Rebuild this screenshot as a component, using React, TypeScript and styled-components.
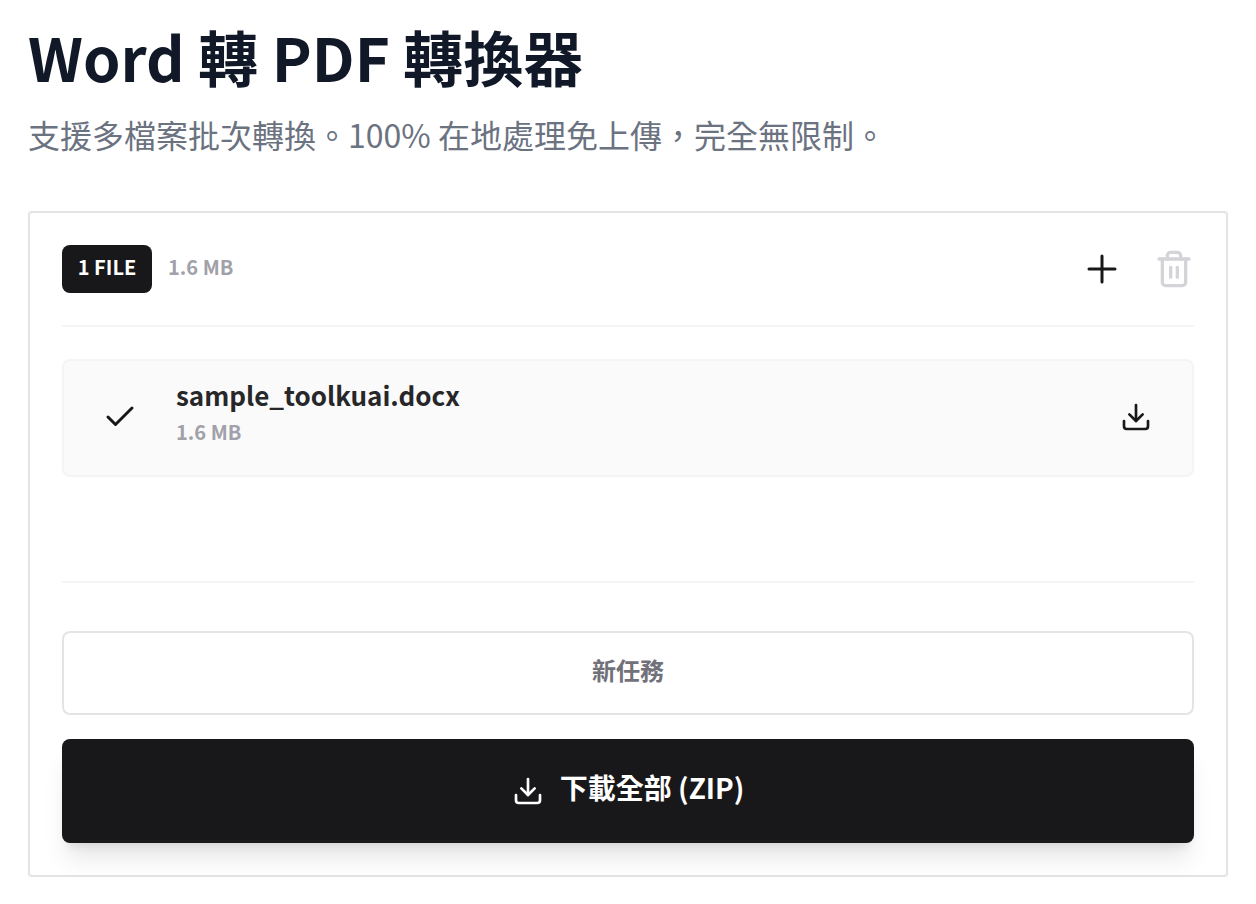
import { createGlobalStyle } from "styled-components";
import styled from "styled-components";

const GlobalStyle = createGlobalStyle`
  html, body {
    margin: 0;
    padding: 0;
    background: #ffffff;
    font-family: "Noto Sans CJK TC", "Noto Sans", sans-serif;
  }
`;

const Page = styled.div`
  padding: 12px 28px 0;
  box-sizing: border-box;
  width: 1256px;
`;

const Title = styled.h1`
  margin: 0;
  font-size: 60px;
  line-height: 88px;
  font-weight: 700;
  color: #111827;
`;

const Subtitle = styled.p`
  margin: 10px 0 53px;
  font-size: 32px;
  line-height: 48px;
  font-weight: 400;
  color: #6b7280;
`;

const Panel = styled.section`
  box-sizing: border-box;
  width: 1200px;
  height: 666px;
  padding: 32px;
  background: #fff;
  border: 2px solid #e4e4e7;
  border-radius: 4px;
  box-shadow: 0 1px 2px rgba(0, 0, 0, 0.05);
  display: flex;
  flex-direction: column;
`;

const Header = styled.div`
  display: flex;
  align-items: center;
  justify-content: space-between;
  height: 82px;
  padding-bottom: 33px;
  box-sizing: border-box;
  border-bottom: 2px solid #f4f4f5;
`;

const HeaderLeft = styled.div`
  display: flex;
  align-items: center;
  gap: 16px;
`;

const Badge = styled.span`
  display: flex;
  align-items: center;
  justify-content: center;
  box-sizing: border-box;
  width: 90px;
  height: 48px;
  padding-bottom: 4px;
  background: #18181b;
  color: #fff;
  border-radius: 8px;
  font-size: 20px;
  font-weight: 700;
`;

const Size = styled.span`
  padding-bottom: 4px;
  font-size: 20px;
  line-height: 28px;
  font-weight: 700;
  color: #a1a1aa;
`;

const HeaderActions = styled.div`
  display: flex;
  align-items: center;
  gap: 32px;
`;

const IconButton = styled.button<{ $color: string }>`
  display: flex;
  padding: 0;
  border: 0;
  background: none;
  color: ${(p) => p.$color};
`;

const FileList = styled.div`
  height: 256px;
  padding-top: 32px;
  box-sizing: border-box;
  border-bottom: 2px solid #f4f4f5;
`;

const FileRow = styled.div`
  box-sizing: border-box;
  height: 118px;
  display: flex;
  align-items: center;
  padding: 0 40px 2px 38px;
  background: #fafafa;
  border: 2px solid #f4f4f5;
  border-radius: 8px;
`;

const StatusIcon = styled.span`
  display: flex;
  color: #18181b;
  margin-right: 38px;
`;

const FileInfo = styled.div`
  flex: 1;
  display: flex;
  flex-direction: column;
  gap: 5px;
  padding-bottom: 8px;
`;

const FileName = styled.span`
  font-size: 26px;
  line-height: 36px;
  font-weight: 700;
  color: #27272a;
`;

const Actions = styled.div`
  display: flex;
  flex-direction: column;
  gap: 24px;
  margin-top: 48px;
`;

const GhostButton = styled.button`
  height: 84px;
  padding: 0 0 8px;
  background: #fff;
  border: 2px solid #e4e4e7;
  border-radius: 8px;
  font-family: inherit;
  font-size: 24px;
  font-weight: 700;
  color: #71717a;
`;

const PrimaryButton = styled.button`
  height: 104px;
  display: flex;
  align-items: center;
  justify-content: center;
  gap: 16px;
  background: #18181b;
  border: 0;
  border-radius: 8px;
  font-family: inherit;
  font-size: 28px;
  font-weight: 700;
  color: #fff;
  box-shadow: 0 20px 25px -5px rgba(0, 0, 0, 0.1), 0 8px 10px -6px rgba(0, 0, 0, 0.1);
`;

const PrimaryLabel = styled.span`
  padding-bottom: 8px;
`;

const DownloadIcon = ({ size = 32 }: { size?: number }) => (
  <svg width={size} height={size} viewBox="0 0 24 24" fill="none" stroke="currentColor" strokeWidth="2" strokeLinecap="round" strokeLinejoin="round">
    <path d="M12 15V3" />
    <path d="M21 15v4a2 2 0 0 1-2 2H5a2 2 0 0 1-2-2v-4" />
    <path d="m7 10 5 5 5-5" />
  </svg>
);

export default function App() {
  return (
    <Page>
      <GlobalStyle />
      <Title>Word 轉 PDF 轉換器</Title>
      <Subtitle>支援多檔案批次轉換。100% 在地處理免上傳，完全無限制。</Subtitle>
      <Panel>
        <Header>
          <HeaderLeft>
            <Badge>1 FILE</Badge>
            <Size>1.6 MB</Size>
          </HeaderLeft>
          <HeaderActions>
            <IconButton $color="#18181b">
              <svg width="40" height="40" viewBox="0 0 40 40" fill="none" stroke="currentColor" strokeWidth="3" strokeLinecap="round">
                <path d="M20 7v26M7 20h26" />
              </svg>
            </IconButton>
            <IconButton $color="#d4d4d8">
              <svg width="40" height="40" viewBox="0 0 24 24" fill="none" stroke="currentColor" strokeWidth="2" strokeLinecap="round" strokeLinejoin="round">
                <path d="M3 6h18" />
                <path d="M19 6v14a2 2 0 0 1-2 2H7a2 2 0 0 1-2-2V6" />
                <path d="M8 6V4a2 2 0 0 1 2-2h4a2 2 0 0 1 2 2v2" />
                <path d="M10 11v6" />
                <path d="M14 11v6" />
              </svg>
            </IconButton>
          </HeaderActions>
        </Header>
        <FileList>
          <FileRow>
            <StatusIcon>
              <svg width="36" height="36" viewBox="0 0 24 24" fill="none" stroke="currentColor" strokeWidth="2" strokeLinecap="round" strokeLinejoin="round">
                <path d="M20 6 9 17l-5-5" />
              </svg>
            </StatusIcon>
            <FileInfo>
              <FileName>sample_toolkuai.docx</FileName>
              <Size>1.6 MB</Size>
            </FileInfo>
            <IconButton $color="#18181b">
              <DownloadIcon />
            </IconButton>
          </FileRow>
        </FileList>
        <Actions>
          <GhostButton>新任務</GhostButton>
          <PrimaryButton>
            <DownloadIcon />
            <PrimaryLabel>下載全部 (ZIP)</PrimaryLabel>
          </PrimaryButton>
        </Actions>
      </Panel>
    </Page>
  );
}
